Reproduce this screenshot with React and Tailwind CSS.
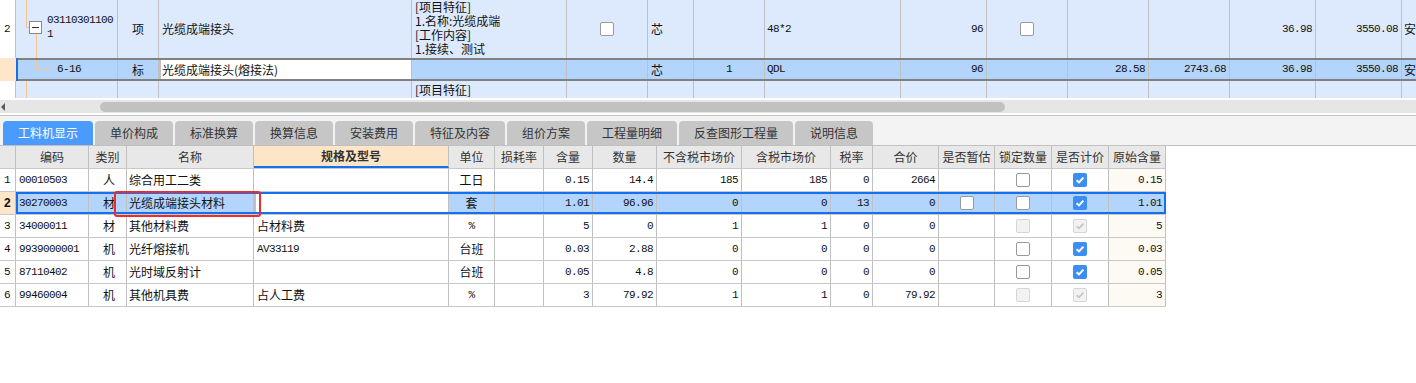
import React from "react";

const F = "font-['Noto_Sans_CJK_SC',sans-serif]";
const N = "font-['Liberation_Mono','Noto_Sans_CJK_SC',monospace] text-[11px] tracking-[-0.6px]";

function Check({ kind }) {
  if (!kind) return null;
  if (kind === "on")
    return (
      <span className="flex h-[14px] w-[14px] items-center justify-center rounded-[2px] bg-[#3d8ef2]">
        <svg width="10" height="10" viewBox="0 0 10 10">
          <path d="M1.6 5.2 L4 7.4 L8.4 2.6" stroke="white" strokeWidth="2" fill="none" />
        </svg>
      </span>
    );
  if (kind === "dison")
    return (
      <span className="flex h-[14px] w-[14px] items-center justify-center rounded-[2px] border border-[#d6d6d6] bg-[#f2f2f2]">
        <svg width="10" height="10" viewBox="0 0 10 10">
          <path d="M1.6 5.2 L4 7.4 L8.4 2.6" stroke="#c4c4c4" strokeWidth="1.6" fill="none" />
        </svg>
      </span>
    );
  if (kind === "dis")
    return <span className="block h-[14px] w-[14px] rounded-[2px] border border-[#d6d6d6] bg-[#f2f2f2]" />;
  return <span className="block h-[14px] w-[14px] rounded-[2px] border border-[#9a9a9a] bg-white" />;
}

function C({ w, cls = "", children }) {
  return (
    <div className={`${w} flex h-full shrink-0 items-center overflow-hidden whitespace-nowrap border-r border-[#c0c0c0] ${cls}`}>
      {children}
    </div>
  );
}

const tabs = [
  ["工料机显示", "w-[90px]", true],
  ["单价构成", "w-[78px]"],
  ["标准换算", "w-[78px]"],
  ["换算信息", "w-[78px]"],
  ["安装费用", "w-[78px]"],
  ["特征及内容", "w-[90px]"],
  ["组价方案", "w-[78px]"],
  ["工程量明细", "w-[90px]"],
  ["反查图形工程量", "w-[114px]"],
  ["说明信息", "w-[78px]"],
];

const LW = [
  "w-[16px]", "w-[73px]", "w-[38px]", "w-[127px]", "w-[195px]", "w-[46px]", "w-[49px]", "w-[49px]",
  "w-[64px]", "w-[85px]", "w-[89px]", "w-[42px]", "w-[66px]", "w-[56px]", "w-[57px]", "w-[57px]", "w-[57px]",
];

const heads = ["", "编码", "类别", "名称", "规格及型号", "单位", "损耗率", "含量", "数量", "不含税市场价", "含税市场价", "税率", "合价", "是否暂估", "锁定数量", "是否计价", "原始含量"];

const rows = [
  { n: "1", code: "00010503", t: "人", name: "综合用工二类", spec: "", unit: "工日", qty: "0.15", num: "14.4", p1: "185", p2: "185", tax: "0", total: "2664", est: null, lock: "off", price: "on", orig: "0.15" },
  { n: "2", sel: true, code: "30270003", t: "材", name: "光缆成端接头材料", spec: "", unit: "套", qty: "1.01", num: "96.96", p1: "0", p2: "0", tax: "13", total: "0", est: "off", lock: "off", price: "on", orig: "1.01" },
  { n: "3", code: "34000011", t: "材", name: "其他材料费", spec: "占材料费", unit: "%", qty: "5", num: "0", p1: "1", p2: "1", tax: "0", total: "0", est: null, lock: "dis", price: "dison", orig: "5" },
  { n: "4", code: "9939000001", t: "机", name: "光纤熔接机", spec: "AV33119", specNum: true, unit: "台班", qty: "0.03", num: "2.88", p1: "0", p2: "0", tax: "0", total: "0", est: null, lock: "off", price: "on", orig: "0.03" },
  { n: "5", code: "87110402", t: "机", name: "光时域反射计", spec: "", unit: "台班", qty: "0.05", num: "4.8", p1: "0", p2: "0", tax: "0", total: "0", est: null, lock: "off", price: "on", orig: "0.05" },
  { n: "6", code: "99460004", t: "机", name: "其他机具费", spec: "占人工费", unit: "%", qty: "3", num: "79.92", p1: "1", p2: "1", tax: "0", total: "79.92", est: null, lock: "dis", price: "dison", orig: "3" },
];

function TopGrid() {
  const line = "bg-[#f2c68c]";
  return (
    <div className={`h-[98px] overflow-hidden text-[12px] text-[#111] ${F}`}>
      {/* row 1 */}
      <div className="flex h-[58px] bg-[#dde9fd]">
        <C w="w-[16px]" cls="bg-white pl-[4px]"><span className={N}>2</span></C>
        <C w="w-[102px]" cls="relative">
          <div className={`absolute left-[10px] top-0 h-[28px] w-px ${line}`} />
          <div className={`absolute left-[10px] top-[27px] h-px w-[4px] ${line}`} />
          <div className="absolute left-[13px] top-[21px] flex h-[13px] w-[13px] items-center justify-center border border-[#8a8a8a] bg-white">
            <div className="h-px w-[7px] bg-[#333]" />
          </div>
          <div className={`absolute left-[20px] top-[34px] bottom-0 w-px ${line}`} />
          <div className={`relative top-[-2px] pl-[31px] leading-[14px] ${N}`}>03110301100<br />1</div>
        </C>
        <C w="w-[41px]" cls="justify-center">项</C>
        <C w="w-[253px]" cls="pl-[3px]">光缆成端接头</C>
        <C w="w-[155px]" cls="items-start pl-[3px]">
          <div className="leading-[14px]">[项目特征]<br />1.名称:光缆成端<br />[工作内容]<br />1.接续、测试</div>
        </C>
        <C w="w-[81px]" cls="justify-center"><Check kind="off" /></C>
        <C w="w-[46px]" cls="pl-[3px]">芯</C>
        <C w="w-[71px]" />
        <C w="w-[136px]" cls="pl-[2px]"><span className={N}>48*2</span></C>
        <C w="w-[86px]" cls="justify-end pr-[3px]"><span className={N}>96</span></C>
        <C w="w-[81px]" cls="justify-center"><Check kind="off" /></C>
        <C w="w-[81px]" />
        <C w="w-[81px]" />
        <C w="w-[86px]" cls="justify-end pr-[3px]"><span className={N}>36.98</span></C>
        <C w="w-[86px]" cls="justify-end pr-[3px]"><span className={N}>3550.08</span></C>
        <div className="flex-1 pl-[2px] leading-[58px]">安</div>
      </div>
      {/* row 2 selected */}
      <div className="relative flex h-[23px]">
        <div className="w-[16px] shrink-0 bg-[#fde6c9]" />
        <div className="flex flex-1 bg-[#b3d4fc]">
          <C w="w-[102px]" cls="relative">
            <div className={`absolute left-[20px] top-0 h-[12px] w-px ${line}`} />
            <div className={`absolute left-[20px] top-[11px] h-px w-[16px] ${line}`} />
            <span className={`pl-[41px] ${N}`}>6-16</span>
          </C>
          <C w="w-[41px]" cls="justify-center">标</C>
          <C w="w-[253px]" cls="border-x-2 border-[#808080] bg-white pl-[1px]">光缆成端接头(熔接法)</C>
          <C w="w-[155px]" />
          <C w="w-[81px]" />
          <C w="w-[46px]" cls="pl-[3px]">芯</C>
          <C w="w-[71px]" cls="justify-center"><span className={N}>1</span></C>
          <C w="w-[136px]" cls="pl-[2px]"><span className={N}>QDL</span></C>
          <C w="w-[86px]" cls="justify-end pr-[3px]"><span className={N}>96</span></C>
          <C w="w-[81px]" />
          <C w="w-[81px]" cls="justify-end pr-[3px]"><span className={N}>28.58</span></C>
          <C w="w-[81px]" cls="justify-end pr-[3px]"><span className={N}>2743.68</span></C>
          <C w="w-[86px]" cls="justify-end pr-[3px]"><span className={N}>36.98</span></C>
          <C w="w-[86px]" cls="justify-end pr-[3px]"><span className={N}>3550.08</span></C>
          <div className="flex flex-1 items-center pl-[2px]">安</div>
        </div>
        <div className="pointer-events-none absolute inset-y-0 left-[16px] right-0 border-y-2 border-[#808080]" />
        <div className="pointer-events-none absolute inset-y-0 left-[16px] w-[2px] bg-[#1a6ee8]" />
      </div>
      {/* row 3 */}
      <div className="flex h-[17px] bg-[#dde9fd]">
        <C w="w-[16px]" cls="bg-white" />
        <C w="w-[102px]" cls="relative"><div className={`absolute left-[10px] inset-y-0 w-px ${line}`} /></C>
        <C w="w-[41px]" />
        <C w="w-[253px]" />
        <C w="w-[155px]" cls="items-start pl-[3px] pt-[2px]"><span className="leading-[14px]">[项目特征]</span></C>
        <C w="w-[81px]" />
        <C w="w-[46px]" />
        <C w="w-[71px]" />
        <C w="w-[136px]" />
        <C w="w-[86px]" />
        <C w="w-[81px]" />
        <C w="w-[81px]" />
        <C w="w-[81px]" />
        <C w="w-[86px]" />
        <C w="w-[86px]" />
        <div className="flex-1" />
      </div>
    </div>
  );
}

function LowRow({ r }) {
  const base = r.sel ? "bg-[#b3d4fc]" : "bg-white";
  const cells = [
    <C key="0" w={LW[0]} cls={`pl-[4px] ${r.sel ? "bg-[#fde6c9]" : "bg-white"}`}><span className={r.sel ? "font-['Liberation_Sans',sans-serif] text-[12px] font-bold" : N}>{r.n}</span></C>,
    <C key="1" w={LW[1]} cls="pl-[3px]"><span className={N}>{r.code}</span></C>,
    <C key="2" w={LW[2]} cls="justify-center pl-[3px]">{r.t}</C>,
    <C key="3" w={LW[3]} cls="pl-[2px]">{r.name}</C>,
    <C key="4" w={LW[4]} cls={`pl-[3px] ${r.sel ? "border-x-2 border-[#1570ef] bg-white" : ""}`}>
      <span className={r.specNum ? N : ""}>{r.spec}</span>
    </C>,
    <C key="5" w={LW[5]} cls="justify-center">{r.unit === "%" ? <span className={N}>%</span> : r.unit}</C>,
    <C key="6" w={LW[6]} />,
    <C key="7" w={LW[7]} cls="justify-end pr-[3px]"><span className={N}>{r.qty}</span></C>,
    <C key="8" w={LW[8]} cls="justify-end pr-[3px]"><span className={N}>{r.num}</span></C>,
    <C key="9" w={LW[9]} cls="justify-end pr-[3px]"><span className={N}>{r.p1}</span></C>,
    <C key="10" w={LW[10]} cls="justify-end pr-[3px]"><span className={N}>{r.p2}</span></C>,
    <C key="11" w={LW[11]} cls="justify-end pr-[3px]"><span className={N}>{r.tax}</span></C>,
    <C key="12" w={LW[12]} cls="justify-end pr-[3px]"><span className={N}>{r.total}</span></C>,
    <C key="13" w={LW[13]} cls="justify-center"><Check kind={r.est} /></C>,
    <C key="14" w={LW[14]} cls="justify-center"><Check kind={r.lock} /></C>,
    <C key="15" w={LW[15]} cls="justify-center"><Check kind={r.price} /></C>,
    <C key="16" w={LW[16]} cls={`justify-end pr-[3px] ${r.sel ? "" : "bg-[#fdfaf4]"}`}><span className={N}>{r.orig}</span></C>,
  ];
  return (
    <div className={`relative flex h-[23px] border-b border-[#c8c8c8] ${base}`}>
      {cells}
      {r.sel && <div className="pointer-events-none absolute inset-y-0 left-[16px] right-0 border-2 border-[#1570ef]" />}
    </div>
  );
}

export default function App() {
  return (
    <div className={`h-[383px] w-[1416px] overflow-hidden bg-white text-[12px] text-[#111] ${F}`}>
      <TopGrid />
      {/* scrollbar */}
      <div className="mt-[2px] flex h-[13px] items-center bg-[#e6e6e6]">
        <div className="ml-[1px] h-0 w-0 border-y-[4px] border-r-[4px] border-y-transparent border-r-[#5a5a5a]" />
        <div className="ml-[95px] h-[10px] w-[905px] rounded-full bg-[#c1c1c1]" />
      </div>
      <div className="mt-[2px] h-px bg-[#c4c4c4]" />
      {/* tabs */}
      <div className="flex h-[30px] items-end gap-[2px] border-b border-[#c0c0c0] bg-[#f3f3f3] pl-[3px]">
        {tabs.map(([t, w, a]) => (
          <div
            key={t}
            className={`${w} flex h-[24px] items-center justify-center rounded-t-[4px] text-[12px] ${a ? "bg-[#4b9bff] text-white" : "bg-[#c6c6c6] text-[#333]"}`}
          >
            {t}
          </div>
        ))}
      </div>
      {/* lower table */}
      <div className="relative w-[1166px]">
        <div className="flex h-[23px] border-b border-[#c8c8c8] bg-[#e8e8e8] text-[#333]">
          {heads.map((h, i) => (
            <C
              key={i}
              w={LW[i]}
              cls={`justify-center ${i === 4 ? "border-b-2 border-b-[#1570ef] bg-[#fde6c8] font-bold" : ""}`}
            >
              {h}
            </C>
          ))}
        </div>
        {rows.map((r) => (
          <LowRow key={r.n} r={r} />
        ))}
        <div className="pointer-events-none absolute left-[114px] top-[45px] h-[26px] w-[147px] rounded-[3px] border-2 border-[#ec2b2b]" />
      </div>
    </div>
  );
}
